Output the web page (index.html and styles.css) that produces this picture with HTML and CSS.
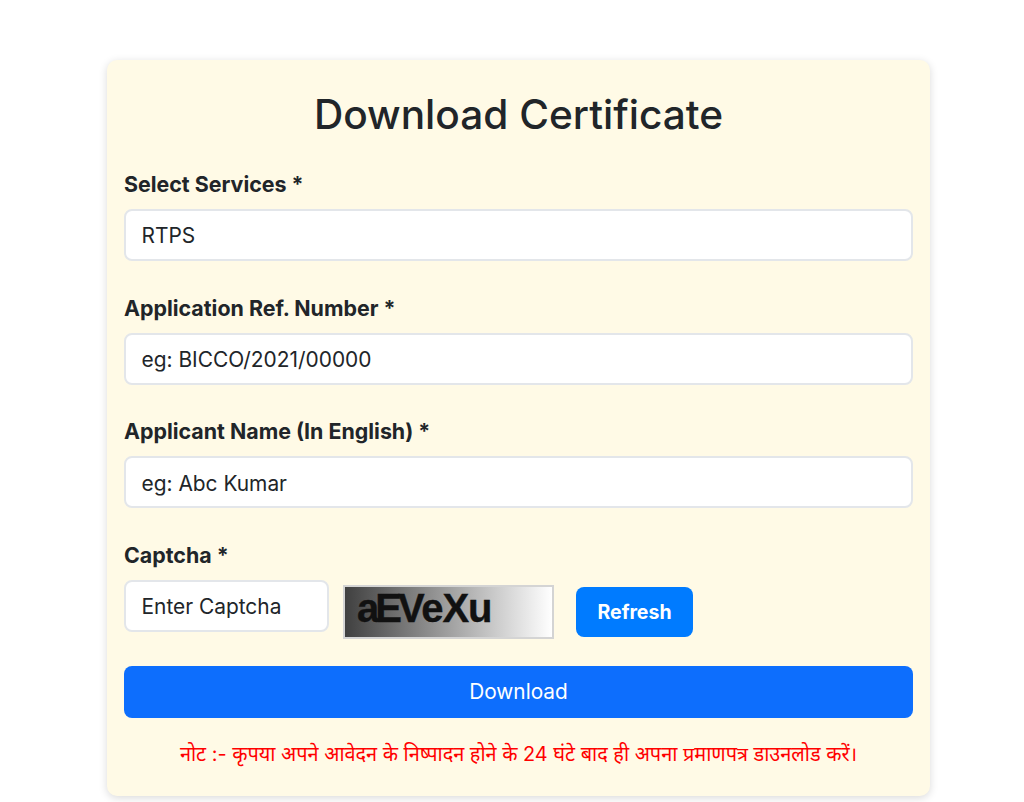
FILE: index.html
```html
<!DOCTYPE html>
<html lang="en">
<head>
  <meta charset="UTF-8" />
  <meta name="viewport" content="width=device-width, initial-scale=1.0" />
  <title>Download Certificate</title>
  <link rel="stylesheet" href="styles.css">
</head>
<body>
  <div class="card">
    <h2 class="title">Download Certificate</h2>

    <div class="form-group">
      <label class="form-label">Select Services *</label>
      <div class="form-control">RTPS</div>
    </div>

    <div class="form-group">
      <label class="form-label">Application Ref. Number *</label>
      <input type="text" class="form-control" placeholder="eg: BICCO/2021/00000" />
    </div>

    <div class="form-group">
      <label class="form-label">Applicant Name (In English) *</label>
      <input type="text" class="form-control" placeholder="eg: Abc Kumar" />
    </div>

    <div class="captcha-group">
      <label class="form-label">Captcha *</label>
      <div class="captcha-row">
        <input type="text" class="form-control captcha-input" placeholder="Enter Captcha" />
        <div class="captcha-image"><span class="tight">aE</span><span>VeXu</span></div>
        <button class="refresh-btn">Refresh</button>
      </div>
    </div>

    <button class="download-btn">Download</button>

    <p class="note">नोट :- कृपया अपने आवेदन के निष्पादन होने के 24 घंटे बाद ही अपना प्रमाणपत्र डाउनलोड करें।</p>
  </div>
</body>
</html>
```

FILE: styles.css
```css
* {
  box-sizing: border-box;
}
body {
  font-family: 'Inter', 'Noto Sans', sans-serif;
  background-color: #ffffff;
  color: #212529;
  font-size: 20px;
  line-height: 1.5;
  margin: 0;
  padding: 60px 94px 6px 107px;
}
.card {
  background-color: #fffae6;
  border-radius: 10px;
  box-shadow: 0 2px 8px rgba(0, 0, 0, 0.15);
  padding: 30px 17px 16px;
  height: 736px;
}
.title {
  font-size: 40.6px;
  font-weight: 500;
  line-height: 50px;
  text-align: center;
  margin: 0 0 30px;
}
.form-group {
  margin-bottom: 32.5px;
}
.form-label {
  display: block;
  font-size: 21.4px;
  font-weight: 700;
  line-height: 29px;
  margin-bottom: 10px;
}
.form-control {
  display: block;
  width: 100%;
  height: 52px;
  padding: 10px 15.5px 8px;
  font-family: inherit;
  font-size: 20.9px;
  line-height: 30px;
  color: #212529;
  background-color: #ffffff;
  border: 2px solid #e3e6ea;
  border-radius: 8px;
}
.form-control::placeholder {
  color: #212529;
  opacity: 1;
}
.captcha-row {
  display: flex;
  align-items: flex-start;
}
.captcha-input {
  width: 205px;
}
.captcha-image {
  width: 211px;
  height: 54px;
  margin: 5px 22px 0 14px;
  padding-left: 12px;
  border: 2px solid #d4d4d4;
  background: linear-gradient(to right, #404040, #ffffff);
  font-family: 'Liberation Sans', Arial, sans-serif;
  font-weight: 700;
  font-size: 40px;
  line-height: 43px;
  letter-spacing: -1.1px;
  color: #111111;
  -webkit-text-stroke: 0.4px #111111;
  white-space: nowrap;
}
.captcha-image .tight {
  letter-spacing: -4px;
}
.refresh-btn {
  width: 117px;
  height: 50px;
  margin-top: 7px;
  background-color: #007bff;
  color: #ffffff;
  border: none;
  border-radius: 8px;
  font-family: inherit;
  font-size: 19.5px;
  font-weight: 700;
}
.download-btn {
  display: block;
  width: 100%;
  height: 52px;
  margin-top: 27px;
  background-color: #0d6efd;
  color: #ffffff;
  border: none;
  border-radius: 8px;
  font-family: inherit;
  font-size: 20.8px;
}
.note {
  color: #ff0000;
  font-size: 19.9px;
  line-height: 27px;
  text-align: center;
  margin: 23px 0 0;
}
```
